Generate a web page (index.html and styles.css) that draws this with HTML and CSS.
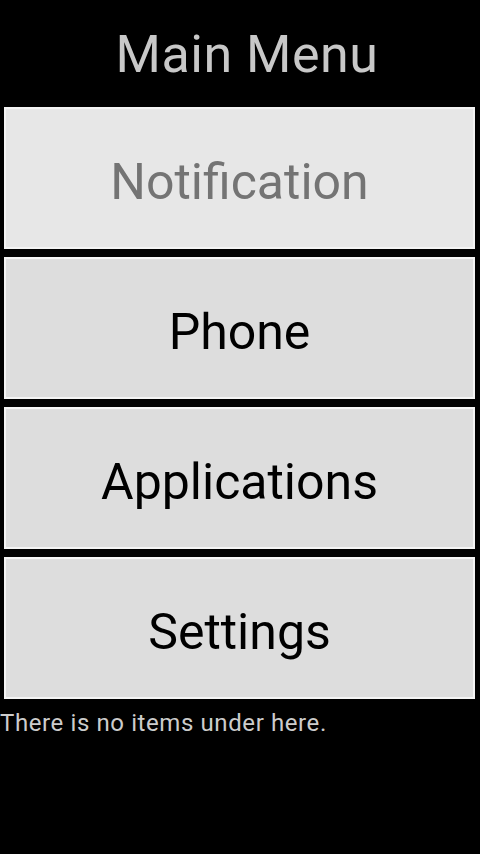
FILE: index.html
```html
<!DOCTYPE html>
<html>
<head>
<meta charset="utf-8">
<link rel="stylesheet" href="styles.css">
</head>
<body>
<div class="screen">
  <h1 class="title">Main Menu</h1>
  <div class="menu">
    <div class="btn btn-disabled">Notification</div>
    <div class="btn">Phone</div>
    <div class="btn">Applications</div>
    <div class="btn">Settings</div>
  </div>
  <p class="empty">There is no items under here.</p>
</div>
</body>
</html>
```
FILE: styles.css
```css
html, body {
  margin: 0;
  padding: 0;
  background: #000;
}
.screen {
  width: 480px;
  height: 854px;
  background: #000;
  font-family: Roboto, "Noto Sans", sans-serif;
  display: flex;
  flex-direction: column;
}
.title {
  margin: 0;
  height: 107px;
  display: flex;
  align-items: center;
  justify-content: center;
  font-weight: normal;
  font-size: 52px;
  letter-spacing: 0.5px;
  color: #c8c8c8;
  padding: 2px 0 0 14px;
  box-sizing: border-box;
}
.menu {
  display: flex;
  flex-direction: column;
  gap: 8px;
  padding: 0 5px 0 4px;
}
.btn {
  height: 142px;
  box-sizing: border-box;
  border: 2px solid #f4f4f4;
  background: #dddddd;
  color: #000;
  display: flex;
  align-items: center;
  justify-content: center;
  font-size: 50px;
  padding-top: 8px;
}
.btn-disabled {
  background: #e7e7e7;
  color: #747474;
}
.empty {
  margin: 10px 0 0 0;
  font-size: 24px;
  letter-spacing: 0.6px;
  color: #cccccc;
}
```
